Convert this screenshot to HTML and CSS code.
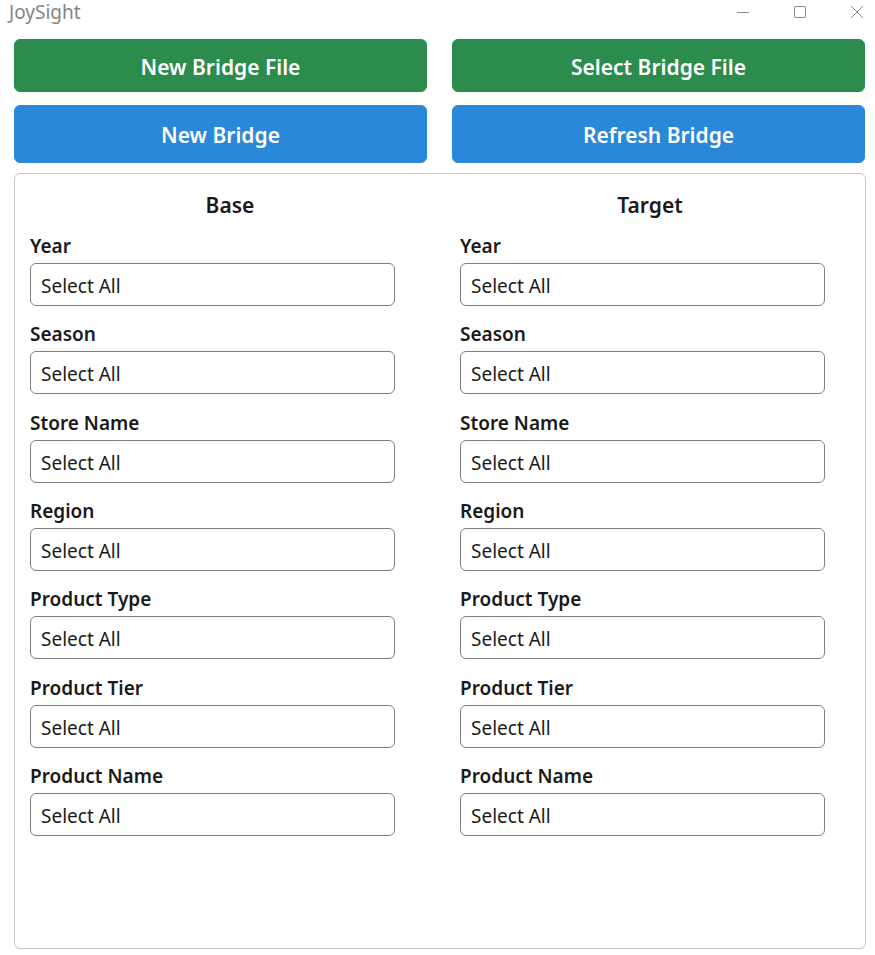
FILE: index.html
```html
<!DOCTYPE html>
<html lang="en">
<head>
<meta charset="utf-8">
<title>JoySight</title>
<link rel="stylesheet" href="styles.css">
</head>
<body>
<header class="titlebar">
  <span class="app-name">JoySight</span>
  <div class="window-controls">
    <button type="button" aria-label="Minimize"><svg viewBox="0 0 14 14"><path d="M1 7.5h12"/></svg></button>
    <button type="button" aria-label="Maximize"><svg viewBox="0 0 14 14"><rect x="1.5" y="1.5" width="11" height="11" rx="0.5"/></svg></button>
    <button type="button" aria-label="Close"><svg viewBox="0 0 14 14"><path d="M1 1l12 12M13 1L1 13"/></svg></button>
  </div>
</header>
<main>
  <div class="actions">
    <button type="button" class="action file">New Bridge File</button>
    <button type="button" class="action file">Select Bridge File</button>
    <button type="button" class="action bridge">New Bridge</button>
    <button type="button" class="action bridge">Refresh Bridge</button>
  </div>
  <form class="panel">
    <section class="filters base">
      <h2>Base</h2>
      <div class="fields">
        <div class="field"><label for="b1">Year</label><select id="b1"><option>Select All</option></select></div>
        <div class="field"><label for="b2">Season</label><select id="b2"><option>Select All</option></select></div>
        <div class="field"><label for="b3">Store Name</label><select id="b3"><option>Select All</option></select></div>
        <div class="field"><label for="b4">Region</label><select id="b4"><option>Select All</option></select></div>
        <div class="field"><label for="b5">Product Type</label><select id="b5"><option>Select All</option></select></div>
        <div class="field"><label for="b6">Product Tier</label><select id="b6"><option>Select All</option></select></div>
        <div class="field"><label for="b7">Product Name</label><select id="b7"><option>Select All</option></select></div>
      </div>
    </section>
    <section class="filters target">
      <h2>Target</h2>
      <div class="fields">
        <div class="field"><label for="t1">Year</label><select id="t1"><option>Select All</option></select></div>
        <div class="field"><label for="t2">Season</label><select id="t2"><option>Select All</option></select></div>
        <div class="field"><label for="t3">Store Name</label><select id="t3"><option>Select All</option></select></div>
        <div class="field"><label for="t4">Region</label><select id="t4"><option>Select All</option></select></div>
        <div class="field"><label for="t5">Product Type</label><select id="t5"><option>Select All</option></select></div>
        <div class="field"><label for="t6">Product Tier</label><select id="t6"><option>Select All</option></select></div>
        <div class="field"><label for="t7">Product Name</label><select id="t7"><option>Select All</option></select></div>
      </div>
    </section>
  </form>
</main>
</body>
</html>
```
FILE: styles.css
```css
* { box-sizing: border-box; }

body {
  margin: 0;
  min-height: 100vh;
  display: flex;
  flex-direction: column;
  background: #fff;
  color: #1a1a1a;
  font-family: "Segoe UI", "Noto Sans", sans-serif;
}

.titlebar {
  display: flex;
  justify-content: space-between;
  align-items: center;
  padding: 0 11px 2px 9px;
}

.app-name { color: #858585; font-size: 19px; line-height: 25px; }

.window-controls { display: flex; gap: 43px; padding-bottom: 1px; }

.window-controls button {
  display: flex;
  padding: 0;
  border: 0;
  background: none;
}

.window-controls svg {
  width: 14px;
  height: 14px;
  fill: none;
  stroke: #8c8c8c;
}

main {
  flex: 1;
  display: flex;
  flex-direction: column;
  gap: 10px;
  padding: 12px 9px 6px 14px;
}

.actions {
  display: grid;
  grid-template-columns: 1fr 1fr;
  grid-template-rows: 53px 58px;
  gap: 13px 25px;
  padding-right: 1px;
}

.action {
  padding: 2px 0 0;
  border: 1px solid;
  border-radius: 6px;
  color: #fff;
  font: 600 21px "Segoe UI", "Noto Sans", sans-serif;
}

.file { background: #2b8c4e; border-color: #2b8c4e; }
.bridge { background: #2b88d8; border-color: #2b88d8; }

.panel {
  flex: 1;
  display: flex;
  gap: 30px;
  padding: 16px 25px 112px 15px;
  border: 1px solid #c8c8c8;
  border-radius: 6px;
}

.filters {
  flex: 1 1 0;
  display: flex;
  flex-direction: column;
}

.base .fields { padding-right: 35px; }
.target .fields { padding-right: 15px; }
.base { padding-right: 0; flex-grow: 20; }
.target { flex-grow: 19; }

h2 {
  margin: 0 0 13px;
  font-size: 21px;
  font-weight: 600;
  line-height: 30px;
  text-align: center;
}

.fields {
  flex: 1;
  display: flex;
  flex-direction: column;
  justify-content: space-between;
  gap: 15px;
}

label {
  display: block;
  margin-bottom: 4px;
  font-size: 19px;
  font-weight: 600;
  line-height: 26px;
}

select {
  display: block;
  appearance: none;
  width: 100%;
  height: 43px;
  padding: 3px 10px 0;
  border: 1px solid #808080;
  border-radius: 6px;
  background: #fff;
  color: #1a1a1a;
  font: 19px "Segoe UI", "Noto Sans", sans-serif;
}
```
